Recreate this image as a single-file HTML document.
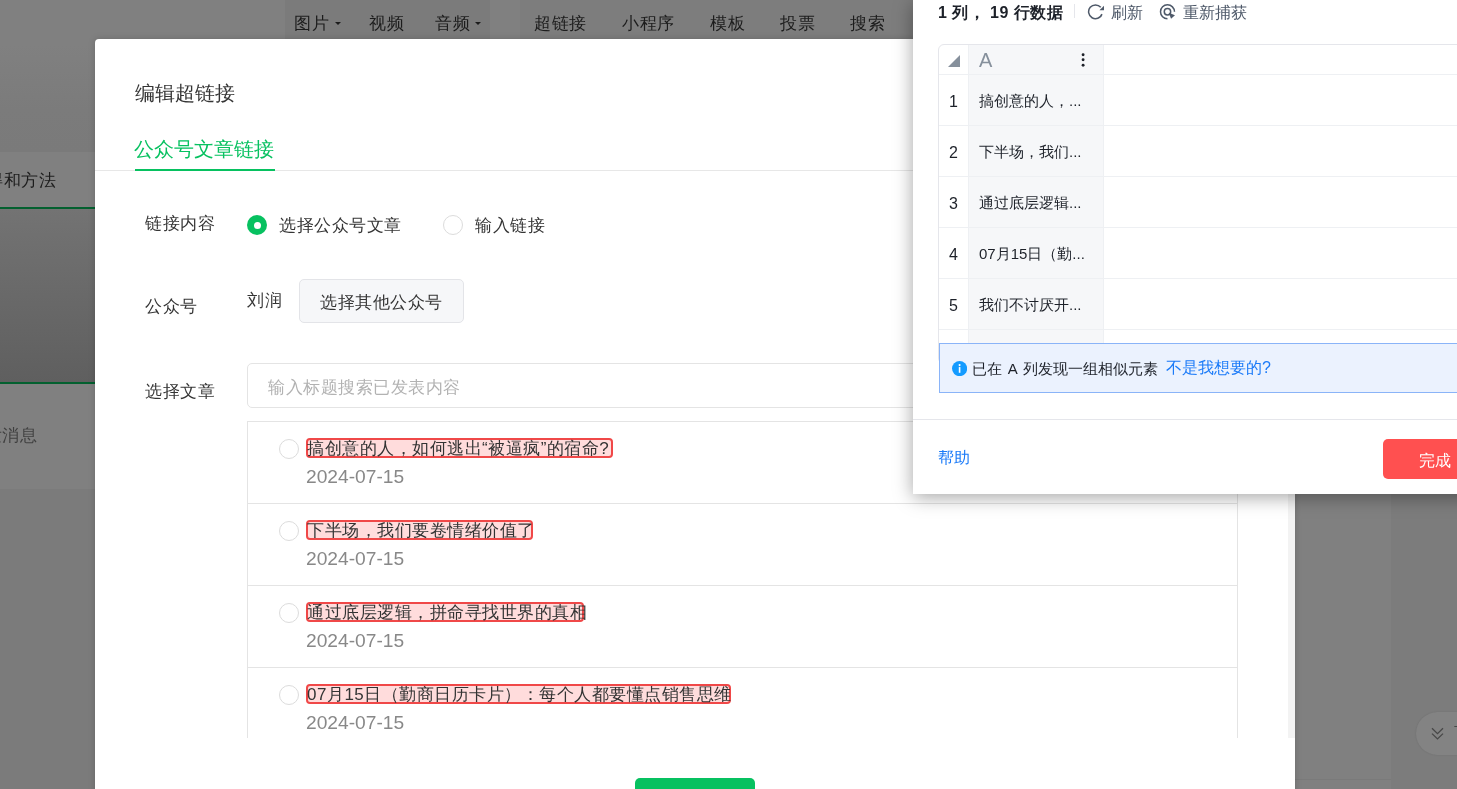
<!DOCTYPE html>
<html><head><meta charset="utf-8">
<style>
*{box-sizing:border-box;margin:0;padding:0}
html,body{width:1457px;height:789px;overflow:hidden;background:#808080;font-family:"Liberation Sans",sans-serif;}
.abs{position:absolute}
.t{position:absolute;white-space:nowrap;line-height:1}
/* background page (already dimmed) */
#bg{position:absolute;left:0;top:0;width:1457px;height:789px;background:#808080;overflow:hidden}
#modal{position:absolute;left:95px;top:39px;width:1200px;height:800px;background:#fff;border-radius:4px;box-shadow:0 0 7px rgba(0,0,0,.17);overflow:hidden}
#panel{position:absolute;left:913px;top:0;width:600px;height:494px;background:#fff;box-shadow:0 3px 18px rgba(0,0,0,.36)}
.radio{position:absolute;width:20px;height:20px;border-radius:50%;border:1px solid #dcdcdc;background:#fff}
.hl{position:absolute;height:20px;border:2px solid #f04848;background:#ffdcdc;border-radius:4px}
.title{font-size:17px;letter-spacing:.5px;color:#333}
.date{font-size:19.2px;color:#888}
.t{will-change:transform}</style></head><body>
<div id="bg">
  <!-- toolbar shades -->
  <div class="abs" style="left:285px;top:0;width:205px;height:39px;background:#7b7b7b"></div>
  <div class="abs" style="left:520px;top:0;width:400px;height:39px;background:#7d7d7d"></div>
  <div class="t" style="left:294px;top:15px;font-size:17px;letter-spacing:.5px;color:#1c1c1c">图片</div>
  <div class="abs" style="left:335px;top:22px;border-left:3px solid transparent;border-right:3px solid transparent;border-top:3.5px solid #1c1c1c"></div>
  <div class="t" style="left:369px;top:15px;font-size:17px;letter-spacing:.5px;color:#1c1c1c">视频</div>
  <div class="t" style="left:435px;top:15px;font-size:17px;letter-spacing:.5px;color:#1c1c1c">音频</div>
  <div class="abs" style="left:474.5px;top:22px;border-left:3px solid transparent;border-right:3px solid transparent;border-top:3.5px solid #1c1c1c"></div>
  <div class="t" style="left:534px;top:15px;font-size:17px;letter-spacing:.5px;color:#1c1c1c">超链接</div>
  <div class="t" style="left:622px;top:15px;font-size:17px;letter-spacing:.5px;color:#1c1c1c">小程序</div>
  <div class="t" style="left:710px;top:15px;font-size:17px;letter-spacing:.5px;color:#1c1c1c">模板</div>
  <div class="t" style="left:780px;top:15px;font-size:17px;letter-spacing:.5px;color:#1c1c1c">投票</div>
  <div class="t" style="left:850px;top:15px;font-size:17px;letter-spacing:.5px;color:#1c1c1c">搜索</div>
  <!-- left sidebar -->
  <div class="abs" style="left:0;top:45px;width:285px;height:107px;background:linear-gradient(#808080,#7b7b7b 60%,#7a7a7a)"></div>
  <div class="t" style="left:-14px;top:171.5px;font-size:17px;letter-spacing:.5px;color:#1c1c1c">得和方法</div>
  <div class="abs" style="left:0;top:207px;width:95px;height:2px;background:#03602f"></div>
  <div class="abs" style="left:0;top:209px;width:95px;height:173px;background:linear-gradient(#737373,#5f5f5f)"></div>
  <div class="abs" style="left:0;top:382px;width:95px;height:2px;background:#03602f"></div>
  <div class="t" style="left:-33px;top:426.5px;font-size:17px;letter-spacing:.5px;color:#404040">群发消息</div>
  <div class="abs" style="left:0;top:489px;width:95px;height:300px;background:#7b7b7b"></div>
  <!-- right bg -->
  <div class="abs" style="left:1391px;top:0;width:66px;height:789px;background:#7c7c7c"></div>
  <div class="abs" style="left:1295px;top:779px;width:96px;height:1px;background:#7a7a7a"></div>
  <div class="abs" style="left:1416px;top:711.5px;width:80px;height:43.5px;border-radius:22px;background:#838383;box-shadow:0 0 2px rgba(0,0,0,.12)"></div><div class="t" style="left:1454px;top:725px;font-size:16px;color:#474747">下</div>
  <svg class="abs" style="left:1431px;top:726px" width="14" height="16" viewBox="0 0 14 16"><path d="M1 2.3l5.5 5.3 5.5-5.3M1 7.6l5.5 5.3 5.5-5.3" fill="none" stroke="#474747" stroke-width="1.3"/></svg>
</div>

<div id="modal">
  <div class="t" style="left:40px;top:44px;font-size:20px;color:#353535">编辑超链接</div>
  <div class="t" style="left:38.5px;top:100px;font-size:20px;color:#07c160">公众号文章链接</div>
  <div class="abs" style="left:0;top:131px;width:1200px;height:1px;background:#e7e7e7"></div>
  <div class="abs" style="left:40px;top:130px;width:140px;height:2px;background:#07c160"></div>

  <div class="t" style="left:50px;top:176px;font-size:17px;letter-spacing:.5px;color:#353535">链接内容</div>
  <div class="abs" style="left:152px;top:176px;width:20px;height:20px;border-radius:50%;background:#07c160"></div>
  <div class="abs" style="left:158.5px;top:182.5px;width:7px;height:7px;border-radius:50%;background:#fff"></div>
  <div class="t" style="left:184px;top:178px;font-size:17px;letter-spacing:.5px;color:#353535">选择公众号文章</div>
  <div class="radio" style="left:348px;top:176px"></div>
  <div class="t" style="left:380px;top:178px;font-size:17px;letter-spacing:.5px;color:#353535">输入链接</div>

  <div class="t" style="left:50px;top:258.5px;font-size:17px;letter-spacing:.5px;color:#353535">公众号</div>
  <div class="t" style="left:152px;top:253px;font-size:17px;letter-spacing:.5px;color:#353535">刘润</div>
  <div class="abs" style="left:204px;top:240px;width:165px;height:44px;border:1px solid #e3e4e8;background:#f6f7f9;border-radius:5px"></div>
  <div class="t" style="left:225px;top:254.5px;font-size:17px;letter-spacing:.5px;color:#353535">选择其他公众号</div>

  <div class="t" style="left:50px;top:344px;font-size:17px;letter-spacing:.5px;color:#353535">选择文章</div>
  <div class="abs" style="left:152px;top:324px;width:991px;height:45px;border:1px solid #e4e4e4;border-radius:5px"></div>
  <div class="t" style="left:173px;top:339.5px;font-size:17px;letter-spacing:.5px;color:#b2b2b2">输入标题搜索已发表内容</div>

  <div class="abs" style="left:152px;top:382px;width:991px;height:317px;border:1px solid #e4e4e4;border-bottom:none"></div>
  <div class="abs" style="left:153px;top:464px;width:989px;height:1px;background:#e4e4e4"></div>
  <div class="abs" style="left:153px;top:546px;width:989px;height:1px;background:#e4e4e4"></div>
  <div class="abs" style="left:153px;top:628px;width:989px;height:1px;background:#e4e4e4"></div>

  <div class="radio" style="left:184px;top:400px"></div>
  <div class="hl" style="left:211px;top:399px;width:307px"></div>
  <div class="t title" style="left:212px;top:401px">搞创意的人，如何逃出“被逼疯”的宿命?</div>
  <div class="t date" style="left:211px;top:428px">2024-07-15</div>

  <div class="radio" style="left:184px;top:482px"></div>
  <div class="hl" style="left:211px;top:481px;width:227px"></div>
  <div class="t title" style="left:212px;top:483px">下半场，我们要卷情绪价值了</div>
  <div class="t date" style="left:211px;top:510px">2024-07-15</div>

  <div class="radio" style="left:184px;top:564px"></div>
  <div class="hl" style="left:211px;top:563px;width:278px"></div>
  <div class="t title" style="left:212px;top:565px">通过底层逻辑，拼命寻找世界的真相</div>
  <div class="t date" style="left:211px;top:592px">2024-07-15</div>

  <div class="radio" style="left:184px;top:646px"></div>
  <div class="hl" style="left:211px;top:645px;width:425px"></div>
  <div class="t title" style="left:212px;top:647px">07月15日（勤商日历卡片）：每个人都要懂点销售思维</div>
  <div class="t date" style="left:211px;top:674px">2024-07-15</div>

  <div class="abs" style="left:1193px;top:0;width:7px;height:699px;background:#f3f3f3"></div>
  <div class="abs" style="left:540px;top:739px;width:120px;height:60px;border-radius:5px;background:#07c160"></div>
</div>

<div id="panel">
  <div class="t" style="left:25px;top:5px;font-size:16px;font-weight:bold;letter-spacing:.45px;color:#1d2129">1 列， 19 行数据</div>
  <div class="abs" style="left:161px;top:4px;width:1px;height:14px;background:#e5e6eb"></div>
  <svg class="abs" style="left:172.2px;top:1.1px" width="21.3" height="21.3" viewBox="0 0 48 48"><path d="M35.5 14.3A15.5 15.5 0 1 0 38.2 29.6" fill="none" stroke="#4e5969" stroke-width="3.4"/><path d="M42.8 10.5V21H32.5Z" fill="#4e5969"/></svg>
  <div class="t" style="left:198px;top:5px;font-size:16px;color:#4e5969">刷新</div>
  <svg class="abs" style="left:244.3px;top:1.1px" width="21.3" height="21.3" viewBox="0 0 48 48"><path d="M39.4 24.3A15.75 15.75 0 1 0 23.6 40.05" fill="none" stroke="#4e5969" stroke-width="3.4"/><circle cx="23.6" cy="24.1" r="7.2" fill="none" stroke="#4e5969" stroke-width="3.4"/><path d="M26.5 26.5L40.5 32.2L31.7 40Z" fill="#4e5969"/></svg>
  <div class="t" style="left:270px;top:5px;font-size:16px;color:#4e5969">重新捕获</div>

  <div class="abs" style="left:25px;top:44px;width:600px;height:320px;border:1px solid #e5e6eb;border-radius:6px;overflow:hidden">
    <div class="abs" style="left:30px;top:0;width:134px;height:320px;background:#f6f7f9"></div>
    <div class="abs" style="left:29px;top:0;width:1px;height:320px;background:#eef0f3"></div>
    <div class="abs" style="left:164px;top:0;width:1px;height:320px;background:#eef0f3"></div>
    <div class="abs" style="left:0;top:29px;width:600px;height:1px;background:#eef0f3"></div>
    <div class="abs" style="left:0;top:80px;width:600px;height:1px;background:#eef0f3"></div>
    <div class="abs" style="left:0;top:131px;width:600px;height:1px;background:#eef0f3"></div>
    <div class="abs" style="left:0;top:182px;width:600px;height:1px;background:#eef0f3"></div>
    <div class="abs" style="left:0;top:233px;width:600px;height:1px;background:#eef0f3"></div>
    <div class="abs" style="left:0;top:284px;width:600px;height:1px;background:#eef0f3"></div>
    <svg class="abs" style="left:9px;top:10px" width="12" height="12" viewBox="0 0 12 12"><path d="M12 0V12H0Z" fill="#86909c"/></svg>
    <div class="t" style="left:40px;top:5px;font-size:20px;color:#86909c">A</div>
    <svg class="abs" style="left:142px;top:8px" width="4" height="15" viewBox="0 0 4 15"><circle cx="2.1" cy="1.7" r="1.45" fill="#1d2129"/><circle cx="2.1" cy="6.8" r="1.45" fill="#1d2129"/><circle cx="2.1" cy="12.2" r="1.45" fill="#1d2129"/></svg>
    <div class="t" style="left:9.5px;top:49px;font-size:16px;color:#1d2129">1</div>
    <div class="t" style="left:39.5px;top:48.0px;font-size:15px;color:#1d2129">搞创意的人，...</div>
    <div class="t" style="left:9.5px;top:100px;font-size:16px;color:#1d2129">2</div>
    <div class="t" style="left:39.5px;top:99.0px;font-size:15px;color:#1d2129">下半场，我们...</div>
    <div class="t" style="left:9.5px;top:151px;font-size:16px;color:#1d2129">3</div>
    <div class="t" style="left:39.5px;top:150.0px;font-size:15px;color:#1d2129">通过底层逻辑...</div>
    <div class="t" style="left:9.5px;top:202px;font-size:16px;color:#1d2129">4</div>
    <div class="t" style="left:39.5px;top:201.0px;font-size:15px;color:#1d2129">07月15日（勤...</div>
    <div class="t" style="left:9.5px;top:253px;font-size:16px;color:#1d2129">5</div>
    <div class="t" style="left:39.5px;top:252.0px;font-size:15px;color:#1d2129">我们不讨厌开...</div>
  </div>
  <div class="abs" style="left:26px;top:343px;width:600px;height:50px;border:1px solid #8ab4f8;background:#ebf2fe"></div>
  <svg class="abs" style="left:38.8px;top:360.8px" width="15.2" height="15.2" viewBox="0 0 16 16"><circle cx="8" cy="8" r="8" fill="#149bff"/><circle cx="8" cy="4.3" r="1.1" fill="#fff"/><rect x="7.15" y="6.4" width="1.7" height="6" fill="#fff"/></svg>
  <div class="t" style="left:58.5px;top:361px;font-size:15px;word-spacing:1.6px;color:#1d2129">已在 A 列发现一组相似元素</div>
  <div class="t" style="left:253px;top:360px;font-size:16px;color:#1a7af8">不是我想要的?</div>
  <div class="abs" style="left:0;top:419px;width:600px;height:1px;background:#e5e6eb"></div>
  <div class="t" style="left:25px;top:450px;font-size:16px;color:#1a7af8">帮助</div>
  <div class="abs" style="left:470px;top:439px;width:120px;height:40px;border-radius:5px;background:#ff5050"></div>
  <div class="t" style="left:506px;top:453px;font-size:16px;color:#fff">完成</div>
</div>
</body></html>
